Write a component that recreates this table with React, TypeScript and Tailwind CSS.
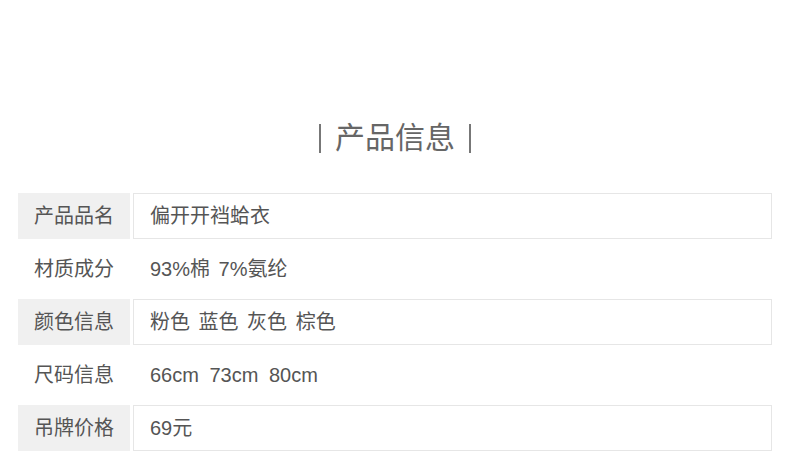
const rows = [
  { label: "产品品名", value: "偏开开裆蛤衣", boxed: true, ws: "" },
  { label: "材质成分", value: "93%棉 7%氨纶", boxed: false, ws: "[word-spacing:3px]" },
  { label: "颜色信息", value: "粉色 蓝色 灰色 棕色", boxed: true, ws: "[word-spacing:3px]" },
  { label: "尺码信息", value: "66cm 73cm 80cm", boxed: false, ws: "[word-spacing:5px]" },
  { label: "吊牌价格", value: "69元", boxed: true, ws: "" },
];

export default function App() {
  return (
    <div
      className="w-[790px] h-[451px] overflow-hidden bg-white text-[#555]"
      style={{ fontFamily: '"Liberation Sans", "Noto Sans CJK SC", sans-serif' }}
    >
      <div className="pt-[118px] flex justify-center items-center h-[158px] text-[30px] leading-[40px] text-[#666]">
        <span className="w-[2px] h-[29px] bg-[#777]" />
        <span className="mx-[14px]">产品信息</span>
        <span className="w-[2px] h-[29px] bg-[#777]" />
      </div>
      <div className="mt-[35px] ml-[18px] w-[754px] flex flex-col gap-[7px]">
        {rows.map((r) => (
          <div key={r.label} className="flex h-[46px] gap-[3px]">
            <div
              className={
                "w-[112px] shrink-0 pl-[16px] flex items-center text-[20px] " +
                (r.boxed ? "bg-[#f0f0f0]" : "")
              }
            >
              {r.label}
            </div>
            <div
              className={
                "flex-1 pl-[16px] flex items-center text-[20px] border " +
                (r.boxed ? "border-[#e6e6e6] " : "border-transparent ") +
                r.ws
              }
            >
              {r.value}
            </div>
          </div>
        ))}
      </div>
    </div>
  );
}
